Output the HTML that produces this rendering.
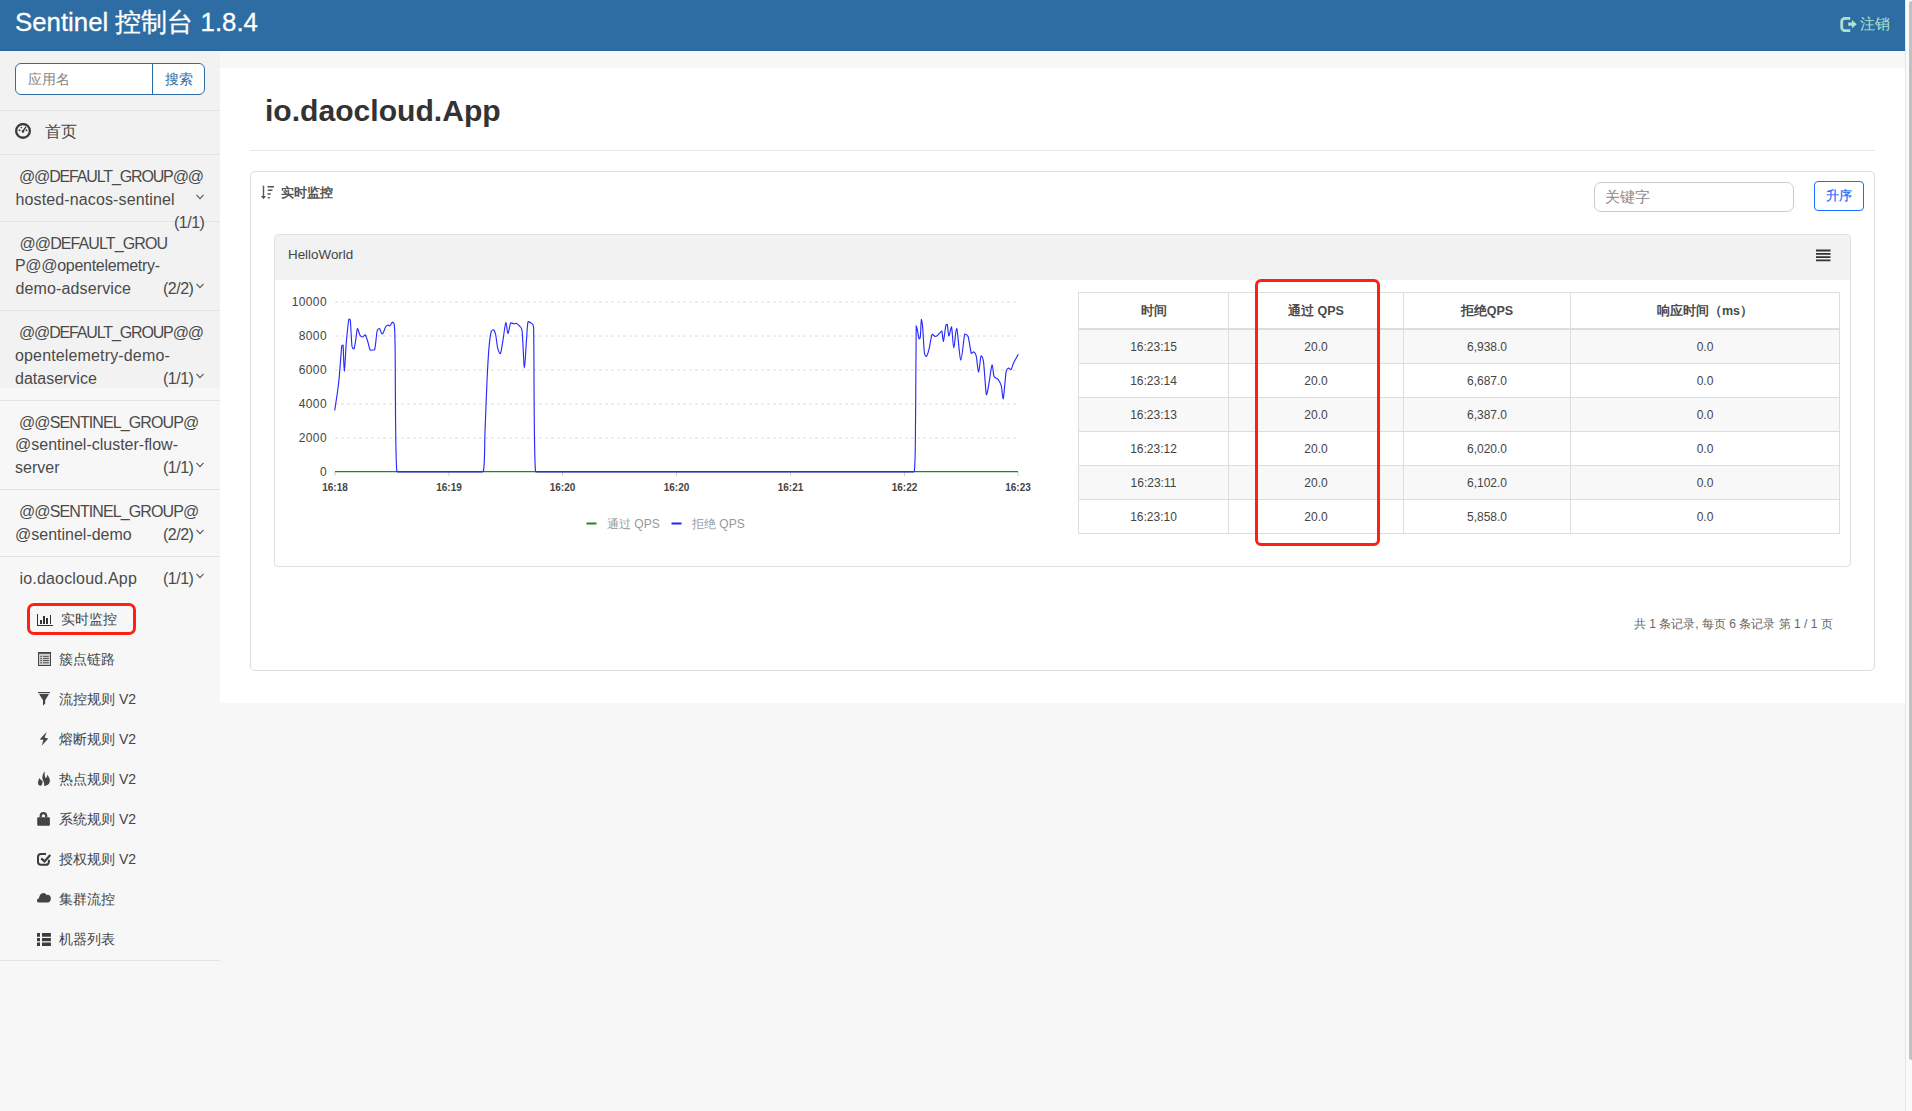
<!DOCTYPE html>
<html><head><meta charset="utf-8">
<style>
*{box-sizing:border-box;margin:0;padding:0}
html,body{width:1912px;height:1111px;overflow:hidden;background:#f7f7f7;font-family:"Liberation Sans",sans-serif;color:#333}
.a{position:absolute}
#hdr{left:0;top:0;width:1905px;height:51px;background:#2e6da4;border-bottom:1px solid #2a65a0}
#title{left:15px;top:7px;font-size:25.8px;-webkit-text-stroke:0.3px #fff;color:#fff;line-height:30px;white-space:nowrap}
#logout{left:1860px;top:15px;font-size:15.2px;color:#b0e2cb;line-height:18px;white-space:nowrap}
#sbar{left:1905px;top:0;width:7px;height:1111px;background:#fafafa;border-left:1px solid #e6e6e6}
#thumb{left:1909px;top:1px;width:3px;height:1059px;background:#c1c1c1;border-radius:3px 0 0 3px}
#side{left:0;top:51px;width:220px;height:337px;background:#f2f2f2}
.hr{position:absolute;left:0;width:220px;height:1px;background:#e3e3e3}
#search{left:15px;top:63px;width:190px;height:32px;border:1px solid #2e6da4;border-radius:6px;background:#fff}
#search .ph{position:absolute;left:12px;top:7px;font-size:14px;color:#858585;line-height:16px}
#search .btn{position:absolute;left:136px;top:0;width:53px;height:30px;border-left:1px solid #2e6da4;color:#2e6da4;font-size:14px;line-height:30px;text-align:center}
.grp{position:absolute;left:15px;width:190px;font-size:15px;letter-spacing:-0.4px;line-height:23px;color:#555;white-space:nowrap}
.cnt{position:absolute;right:11px;font-size:15px;color:#555;line-height:23px;letter-spacing:-0.4px}
.chev{position:absolute;left:196px;width:8px;height:6px;overflow:visible}
.gl{position:absolute;font-size:16px;line-height:23px;color:#4a4a4a;white-space:nowrap}
.sub{position:absolute;left:36px;width:170px;height:20px;font-size:14px;line-height:20px;color:#444;white-space:nowrap}
.sub .ic{position:absolute;top:3px}
.sub span{position:absolute;left:23px;top:-1px}
#panel{left:220px;top:68px;width:1685px;height:635px;background:#fff}
#h1{left:265px;top:92.5px;font-size:30.1px;font-weight:bold;color:#333;line-height:36px;white-space:nowrap}
#hr1{left:250px;top:150px;width:1625px;height:1px;background:#e6e6e6}
#card{left:250px;top:171px;width:1625px;height:500px;border:1px solid #ddd;border-radius:5px;background:#fff}
#cardt{left:281px;top:185px;font-size:13.3px;font-weight:bold;color:#555;line-height:16px}
#kw{left:1594px;top:182px;width:200px;height:30px;border:1px solid #ccc;border-radius:7px;background:#fff}
#kw span{position:absolute;left:10px;top:5px;font-size:15px;color:#888;line-height:17px}
#asc{left:1814px;top:181px;width:50px;height:30px;border:1px solid #1a6eff;border-radius:4px;color:#1a6eff;font-size:12.5px;line-height:28px;text-align:center;-webkit-text-stroke:0.2px #1a6eff}
#inner{left:274px;top:234px;width:1577px;height:333px;border:1px solid #e0e0e0;border-radius:4px;background:#fff;overflow:hidden}
#innerh{left:0;top:0;width:1577px;height:45px;background:#f2f2f2}
#hw{left:288px;top:246.5px;font-size:13.4px;color:#444;line-height:15px}
table{position:absolute;left:1078px;top:292px;border-collapse:collapse;font-size:12px;color:#444}
td,th{border:1px solid #ddd;text-align:center;height:34px;padding:0}
tr.r1 td{height:35px;padding-top:1px}
th{font-weight:bold;height:36px;padding:1.5px 0 0 0;border-bottom:2px solid #ddd;color:#4a4a4a;font-size:12.5px}
tr.o td{background:#f8f8f8}
#red1{left:1255px;top:279px;width:125px;height:267px;border:3px solid #fe2015;border-radius:6px}
#red2{left:27px;top:602.5px;width:109px;height:32.5px;border:3px solid #fe2015;border-radius:7px}
#foot{left:1634px;top:617px;font-size:12px;color:#666;line-height:14px;white-space:nowrap}
</style></head><body>
<div id="hdr" class="a"></div>
<div id="title" class="a">Sentinel 控制台 1.8.4</div>
<svg class="a" style="left:1840px;top:17px" width="17" height="15" viewBox="0 0 17 15"><path d="M10.3 1.3 H5 A3.3 3.3 0 0 0 1.7 4.6 V10.4 A3.3 3.3 0 0 0 5 13.7 H10.3" fill="none" stroke="#b0e2cb" stroke-width="2.8"/><path d="M8.2 5.6 H12 V3 L16.8 7.2 L12 11.3 V8.7 H8.2Z" fill="#b0e2cb"/></svg>
<div id="logout" class="a">注销</div>
<div id="sbar" class="a"></div>
<div id="thumb" class="a"></div>
<div id="side" class="a"></div>
<div id="search" class="a"><span class="ph">应用名</span><span class="btn">搜索</span></div>
<div class="hr" style="top:110px"></div>
<div class="hr" style="top:154px"></div>
<div class="hr" style="top:221px"></div>
<div class="hr" style="top:310px"></div>
<div class="hr" style="top:400px"></div>
<div class="hr" style="top:489px"></div>
<div class="hr" style="top:556px"></div>
<div class="hr" style="top:960px"></div>

<svg class="a" style="left:15px;top:123px" width="16" height="16" viewBox="0 0 16 16"><circle cx="8" cy="7.9" r="6.85" fill="none" stroke="#3a3a3a" stroke-width="2.3"/><path d="M8 8.2 L10.6 4.3" stroke="#3a3a3a" stroke-width="1.4" stroke-linecap="round"/><circle cx="8" cy="8.4" r="1.3" fill="#3a3a3a"/><circle cx="4.5" cy="7.3" r="0.95" fill="#3a3a3a"/><circle cx="11.5" cy="7.3" r="0.95" fill="#3a3a3a"/><circle cx="6.3" cy="4.6" r="0.8" fill="#3a3a3a"/></svg>
<div class="a" style="left:44.5px;top:122px;font-size:16px;line-height:20px;color:#444">首页</div>

<div class="gl" style="left:19px;top:165px;letter-spacing:-1.15px">@@DEFAULT_GROUP@@</div>
<div class="gl" style="left:15.5px;top:188px;letter-spacing:0.13px">hosted-nacos-sentinel</div>
<div class="gl" style="left:174px;top:211px;letter-spacing:-0.5px">(1/1)</div>
<svg class="chev" style="top:194px" viewBox="0 0 8 6"><path d="M0.5 0.8 L4 4.6 L7.5 0.8" fill="none" stroke="#555" stroke-width="1.1"/></svg>

<div class="gl" style="left:19.5px;top:232px;letter-spacing:-0.9px">@@DEFAULT_GROU</div>
<div class="gl" style="left:15px;top:254px;letter-spacing:-0.3px">P@@opentelemetry-</div>
<div class="gl" style="left:15.5px;top:277px;letter-spacing:0.13px">demo-adservice</div>
<div class="gl" style="left:163px;top:277px;letter-spacing:-0.5px">(2/2)</div>
<svg class="chev" style="top:283px" viewBox="0 0 8 6"><path d="M0.5 0.8 L4 4.6 L7.5 0.8" fill="none" stroke="#555" stroke-width="1.1"/></svg>

<div class="gl" style="left:19px;top:321px;letter-spacing:-1.15px">@@DEFAULT_GROUP@@</div>
<div class="gl" style="left:15px;top:344px;letter-spacing:0.15px">opentelemetry-demo-</div>
<div class="gl" style="left:15px;top:367px">dataservice</div>
<div class="gl" style="left:163px;top:367px;letter-spacing:-0.5px">(1/1)</div>
<svg class="chev" style="top:373px" viewBox="0 0 8 6"><path d="M0.5 0.8 L4 4.6 L7.5 0.8" fill="none" stroke="#555" stroke-width="1.1"/></svg>

<div class="gl" style="left:19px;top:411px;letter-spacing:-0.9px">@@SENTINEL_GROUP@</div>
<div class="gl" style="left:15px;top:433px">@sentinel-cluster-flow-</div>
<div class="gl" style="left:15px;top:456px">server</div>
<div class="gl" style="left:163px;top:456px;letter-spacing:-0.5px">(1/1)</div>
<svg class="chev" style="top:462px" viewBox="0 0 8 6"><path d="M0.5 0.8 L4 4.6 L7.5 0.8" fill="none" stroke="#555" stroke-width="1.1"/></svg>

<div class="gl" style="left:19px;top:500px;letter-spacing:-0.9px">@@SENTINEL_GROUP@</div>
<div class="gl" style="left:15px;top:523px">@sentinel-demo</div>
<div class="gl" style="left:163px;top:523px;letter-spacing:-0.5px">(2/2)</div>
<svg class="chev" style="top:529px" viewBox="0 0 8 6"><path d="M0.5 0.8 L4 4.6 L7.5 0.8" fill="none" stroke="#555" stroke-width="1.1"/></svg>

<div class="gl" style="left:19.5px;top:567px;letter-spacing:0.18px">io.daocloud.App</div>
<div class="gl" style="left:163px;top:567px;letter-spacing:-0.5px">(1/1)</div>
<svg class="chev" style="top:573px" viewBox="0 0 8 6"><path d="M0.5 0.8 L4 4.6 L7.5 0.8" fill="none" stroke="#555" stroke-width="1.1"/></svg>

<div class="sub" style="top:610px"><svg class="ic" style="left:1px;top:3px" width="17" height="14" viewBox="0 0 17 14" shape-rendering="crispEdges"><rect x="0" y="1" width="1.2" height="12" fill="#333"/><rect x="0" y="12" width="16" height="1.1" fill="#333"/><rect x="3" y="7" width="2" height="4" fill="#333"/><rect x="6.2" y="3.3" width="1.8" height="7.7" fill="#333"/><rect x="9.4" y="5.2" width="1.8" height="5.8" fill="#333"/><rect x="12.5" y="2" width="1.8" height="9" fill="#333"/></svg><span style="left:25px">实时监控</span></div>
<div class="sub" style="top:650px"><svg class="ic" style="left:0;top:0" width="20" height="20" viewBox="0 0 20 20"><rect x="2" y="2" width="13" height="14" fill="#444"/><rect x="3" y="3.8" width="11" height="11.2" fill="#cfcfcf"/><path d="M4.2 6.4 H6 M7 6.4 H12.8 M4.2 8.6 H6 M7 8.6 H12.8 M4.2 10.6 H6 M7 10.6 H12.8 M4.2 12.8 H6 M7 12.8 H12.8" stroke="#555" stroke-width="1"/></svg><span>簇点链路</span></div>
<div class="sub" style="top:690px"><svg class="ic" style="left:0;top:0" width="20" height="20" viewBox="0 0 20 20"><rect x="2" y="2" width="11.9" height="1.2" fill="#444"/><path d="M3.1 4 H13 L9.2 10.2 V13.5 L7 15.7 V10.2 Z" fill="#444"/></svg><span>流控规则 V2</span></div>
<div class="sub" style="top:730px"><svg class="ic" style="left:0;top:0" width="20" height="20" viewBox="0 0 20 20"><path d="M10.6 2.1 L3.6 9.5 L7.5 9.7 L5.6 15.8 L12.3 8.5 L8.6 7.7 Z" fill="#444"/></svg><span>熔断规则 V2</span></div>
<div class="sub" style="top:770px"><svg class="ic" style="left:0;top:0" width="20" height="20" viewBox="0 0 20 20"><path d="M8.5 1.3 C7 3.5 6.2 6 6.4 8.5 C6.6 10.5 8.2 12 8.2 14 C8.2 14.8 8 15.5 7.8 16 C11.5 15.8 13.9 13.8 13.9 10.8 C13.9 8.5 12.6 6.5 11 4.8 C11.1 6.3 10.6 7.8 9.8 8.3 C8.9 7.4 8.6 4.5 8.6 3 C8.6 2.4 8.6 1.8 8.5 1.3Z M3.4 8.1 C4.2 9.5 5.5 10.3 6.6 11.3 C6.8 13.5 5.8 15.6 4.6 15.7 C3 15.8 2 14.5 2 13 C2 11.2 2.8 9.8 3.4 8.1Z" fill="#444"/></svg><span>热点规则 V2</span></div>
<div class="sub" style="top:810px"><svg class="ic" style="left:0;top:0" width="20" height="20" viewBox="0 0 20 20"><path d="M4.7 7.5 V5.85 A2.75 2.75 0 0 1 10.2 5.85 V7.5" fill="none" stroke="#444" stroke-width="2.2"/><rect x="1.2" y="7.2" width="12.7" height="8.6" rx="1" fill="#444"/></svg><span>系统规则 V2</span></div>
<div class="sub" style="top:850px"><svg class="ic" style="left:0;top:0" width="20" height="20" viewBox="0 0 20 20"><path d="M10 4 H5 A3 3 0 0 0 2 7 V11.8 A3 3 0 0 0 5 14.8 H9.9 A3 3 0 0 0 12.9 11.8 V9.8" fill="none" stroke="#3c3c3c" stroke-width="2"/><path d="M5.2 8.4 L8.5 11.4 L14.3 5.1" fill="none" stroke="#3c3c3c" stroke-width="2.2"/></svg><span>授权规则 V2</span></div>
<div class="sub" style="top:890px"><svg class="ic" style="left:0;top:0" width="20" height="20" viewBox="0 0 20 20"><path d="M3 12.6 C1.5 12.6 1 11.4 1 10.5 C1 9.3 2 8.4 3 8.3 C3.2 5.2 5 3 7.2 3 C8.8 3 10 3.8 10.8 5.2 C11.3 4.9 11.8 4.8 12.4 4.9 C13.9 5.1 14.9 6.5 14.9 8.5 C14.9 10.8 13.6 12.6 11.5 12.6Z" fill="#444"/></svg><span>集群流控</span></div>
<div class="sub" style="top:930px"><svg class="ic" style="left:0;top:0" width="20" height="20" viewBox="0 0 20 20"><path d="M1 3 H4 V6.7 H1Z M6 3 H14.9 V6.7 H6Z M1 8 H4 V11.2 H1Z M6 8 H14.9 V11.2 H6Z M1 12.6 H4 V16 H1Z M6 12.6 H14.9 V16 H6Z" fill="#3c3c3c"/></svg><span>机器列表</span></div>


<div id="panel" class="a"></div>
<div id="h1" class="a">io.daocloud.App</div>
<div id="hr1" class="a"></div>
<div id="card" class="a"></div>
<svg class="a" style="left:261px;top:185px" width="14" height="15" viewBox="0 0 14 15"><path d="M2.5 0.7 V12.5" stroke="#555" stroke-width="1.4"/><path d="M0 11 H5 L2.5 14.2Z" fill="#555"/><path d="M6.5 1.7 H13 M6.8 5.3 H11.4 M6.5 9 H9.7 M6.8 12.8 H8.8" stroke="#555" stroke-width="1.4"/></svg>
<div id="cardt" class="a">实时监控</div>
<div id="kw" class="a"><span>关键字</span></div>
<div id="asc" class="a">升序</div>
<div id="inner" class="a"><div id="innerh" class="a"></div></div>
<div id="hw" class="a">HelloWorld</div>
<svg class="a" style="left:1816px;top:249px" width="15" height="14" viewBox="0 0 15 14"><path d="M0 1.5 H14.5 M0 4.8 H14.5 M0 8.1 H14.5 M0 11.4 H14.5" stroke="#333" stroke-width="1.8"/></svg>
<svg class="a" style="left:0;top:0" width="1100" height="560" viewBox="0 0 1100 560">
<g><line x1="335" y1="302" x2="1018" y2="302" stroke="#dcdcdc" stroke-width="1" stroke-dasharray="3 3" stroke-dashoffset="0"/><line x1="335" y1="336" x2="1018" y2="336" stroke="#dcdcdc" stroke-width="1" stroke-dasharray="3 3" stroke-dashoffset="0"/><line x1="335" y1="370" x2="1018" y2="370" stroke="#dcdcdc" stroke-width="1" stroke-dasharray="3 3" stroke-dashoffset="0"/><line x1="335" y1="404" x2="1018" y2="404" stroke="#dcdcdc" stroke-width="1" stroke-dasharray="3 3" stroke-dashoffset="0"/><line x1="335" y1="438" x2="1018" y2="438" stroke="#dcdcdc" stroke-width="1" stroke-dasharray="3 3" stroke-dashoffset="0"/></g>
<g font-family="Liberation Sans, sans-serif" font-size="12" fill="#444" letter-spacing="0.4"><text x="327" y="306.3" text-anchor="end">10000</text><text x="327" y="340.3" text-anchor="end">8000</text><text x="327" y="374.3" text-anchor="end">6000</text><text x="327" y="408.3" text-anchor="end">4000</text><text x="327" y="442.3" text-anchor="end">2000</text><text x="327" y="476.3" text-anchor="end">0</text></g>
<g font-family="Liberation Sans, sans-serif" font-size="10" font-weight="bold" fill="#444"><line x1="335" y1="472" x2="335" y2="476" stroke="#ccc" stroke-width="1"/><text x="335" y="491" text-anchor="middle">16:18</text><line x1="449" y1="472" x2="449" y2="476" stroke="#ccc" stroke-width="1"/><text x="449" y="491" text-anchor="middle">16:19</text><line x1="562.5" y1="472" x2="562.5" y2="476" stroke="#ccc" stroke-width="1"/><text x="562.5" y="491" text-anchor="middle">16:20</text><line x1="676.5" y1="472" x2="676.5" y2="476" stroke="#ccc" stroke-width="1"/><text x="676.5" y="491" text-anchor="middle">16:20</text><line x1="790.5" y1="472" x2="790.5" y2="476" stroke="#ccc" stroke-width="1"/><text x="790.5" y="491" text-anchor="middle">16:21</text><line x1="904.5" y1="472" x2="904.5" y2="476" stroke="#ccc" stroke-width="1"/><text x="904.5" y="491" text-anchor="middle">16:22</text><line x1="1018" y1="472" x2="1018" y2="476" stroke="#ccc" stroke-width="1"/><text x="1018" y="491" text-anchor="middle">16:23</text></g>
<line x1="335" y1="471.7" x2="1018" y2="471.7" stroke="#1a8a1a" stroke-width="1.3"/>
<line x1="397" y1="471.7" x2="483" y2="471.7" stroke="#2424d8" stroke-width="1.4"/>
<line x1="535.5" y1="471.7" x2="914" y2="471.7" stroke="#2424d8" stroke-width="1.4"/>
<path d="M334.7 410.5 C335.4 405.8 337.5 393.1 338.7 382.3 C339.9 371.5 341.1 351.8 341.8 345.6 C342.5 345.0 342.7 345.0 343.1 345.0 C343.5 349.3 343.8 371.2 344.3 371.2 C344.9 370.6 345.6 350.0 346.4 341.3 C347.2 332.6 348.2 322.6 348.9 319.0 C349.5 319.0 349.8 319.0 350.3 320.0 C350.8 324.6 351.4 341.6 352.0 346.4 C352.6 349.0 353.4 349.0 354.0 349.0 C354.6 347.9 355.2 343.0 355.8 339.6 C356.4 336.2 356.8 329.2 357.5 328.5 C358.2 328.5 359.1 333.9 360.0 335.3 C360.9 336.7 361.7 337.0 362.6 337.0 C363.5 336.9 364.4 334.8 365.2 334.8 C366.0 335.5 366.8 338.7 367.7 341.3 C368.6 343.9 369.1 348.8 370.3 350.2 C371.5 350.2 373.5 350.2 374.6 349.8 C375.7 346.6 376.3 334.6 377.1 331.0 C377.9 328.5 378.5 328.5 379.4 328.5 C380.3 329.0 381.2 334.0 382.3 334.0 C383.4 333.7 384.7 328.3 385.7 326.8 C386.7 325.3 387.5 325.1 388.2 325.0 C388.9 325.0 389.3 325.9 390.0 325.9 C390.7 325.4 391.8 322.4 392.5 322.1 C393.2 322.1 393.8 322.1 394.2 324.2 C394.6 328.2 394.7 324.2 395.1 346.4 C395.5 370.9 395.1 450.6 396.8 471.5 C411.5 471.5 468.6 471.5 483.3 471.5 C485.0 464.9 484.4 447.3 485.0 431.9 C485.6 416.5 486.4 393.1 487.1 378.9 C487.8 364.6 488.4 354.4 489.1 346.4 C489.8 338.4 490.6 333.8 491.4 331.0 C492.1 329.7 492.9 329.7 493.6 329.7 C494.3 330.3 494.9 331.3 495.6 334.4 C496.3 337.5 496.9 344.9 497.7 348.1 C498.5 351.3 499.5 353.6 500.4 353.6 C501.2 352.5 501.9 346.5 502.8 341.3 C503.7 336.1 505.0 323.8 505.9 322.5 C506.8 322.5 507.1 333.6 507.9 333.6 C508.7 333.6 509.7 324.4 510.7 322.8 C511.7 322.8 513.2 323.7 514.1 323.8 C515.0 323.8 515.3 323.3 516.2 323.3 C517.1 323.7 518.6 324.9 519.6 326.2 C520.6 327.5 521.3 326.2 522.1 331.0 C522.9 337.9 523.7 366.1 524.4 367.8 C525.1 367.8 525.8 349.0 526.4 341.3 C527.0 333.6 527.2 324.6 528.1 321.6 C529.0 321.6 530.6 322.4 531.5 323.3 C532.4 324.2 532.9 323.3 533.6 326.8 C534.3 351.5 533.6 447.4 535.5 471.5 C599.0 471.5 850.9 471.5 914.3 471.5 C915.6 461.8 915.3 437.8 915.6 413.5 C915.9 389.2 915.9 339.7 916.2 325.9 C916.5 325.9 917.0 328.6 917.5 330.8 C918.0 333.0 918.6 337.8 919.1 338.9 C919.6 338.9 919.9 338.9 920.3 337.3 C920.7 334.1 921.0 321.0 921.4 319.4 C921.8 319.4 922.2 322.2 922.7 327.6 C923.2 333.0 923.7 347.1 924.3 351.9 C924.9 356.4 925.6 356.4 926.4 356.4 C927.1 356.1 927.8 353.9 928.8 350.2 C929.8 346.5 931.0 336.7 932.1 334.4 C933.2 334.4 934.6 336.5 935.7 336.5 C936.8 336.4 937.9 334.9 938.9 334.0 C939.9 333.1 941.0 331.1 941.8 331.1 C942.5 332.3 942.7 341.3 943.4 341.3 C944.1 340.3 945.2 327.9 945.9 325.1 C946.5 324.3 946.8 324.3 947.3 324.3 C947.8 326.1 948.2 335.6 948.9 336.0 C949.6 336.0 950.7 326.7 951.5 326.7 C952.3 328.7 952.9 347.5 953.8 347.8 C954.7 347.8 955.5 328.4 956.7 328.4 C957.9 330.4 959.4 359.1 960.8 360.0 C962.1 360.0 963.6 337.9 964.8 334.0 C966.0 334.0 967.0 334.0 968.1 336.5 C969.2 339.8 970.4 350.9 971.3 353.5 C972.2 353.5 972.9 351.9 973.7 351.9 C974.5 352.3 975.4 352.5 976.2 355.9 C977.0 359.3 977.8 372.1 978.6 372.1 C979.4 372.1 980.2 357.6 981.0 355.9 C981.8 355.9 982.6 355.9 983.5 361.6 C984.4 368.1 985.5 391.0 986.4 394.8 C987.3 394.8 987.8 389.3 988.8 384.3 C989.8 379.3 991.2 366.2 992.1 364.8 C993.0 364.8 993.0 373.8 994.0 376.2 C995.0 378.6 996.9 377.8 998.1 379.4 C999.3 381.0 1000.4 382.6 1001.3 385.9 C1002.1 389.1 1002.4 398.9 1003.2 398.9 C1004.0 396.5 1005.3 376.4 1006.2 371.3 C1007.1 368.1 1007.8 368.4 1008.6 368.1 C1009.4 368.1 1010.2 369.7 1011.0 369.7 C1011.8 368.9 1012.3 365.8 1013.5 363.2 C1014.7 360.6 1017.5 355.8 1018.3 354.3" fill="none" stroke="#2a2aff" stroke-width="1.15" stroke-linejoin="round"/>
<line x1="586.5" y1="523.5" x2="596.5" y2="523.5" stroke="#1a8a1a" stroke-width="2"/>
<line x1="671.5" y1="523.5" x2="681.5" y2="523.5" stroke="#2222ee" stroke-width="2"/>
<g font-family="Liberation Sans, sans-serif" font-size="12" fill="#999"><text x="607" y="527.5">通过 QPS</text><text x="692" y="527.5">拒绝 QPS</text></g>
</svg>
<table>
<tr><th style="width:150px">时间</th><th style="width:175px">通过 QPS</th><th style="width:167px">拒绝QPS</th><th style="width:269px">响应时间（ms）</th></tr>
<tr class="o r1"><td>16:23:15</td><td>20.0</td><td>6,938.0</td><td>0.0</td></tr>
<tr><td>16:23:14</td><td>20.0</td><td>6,687.0</td><td>0.0</td></tr>
<tr class="o"><td>16:23:13</td><td>20.0</td><td>6,387.0</td><td>0.0</td></tr>
<tr><td>16:23:12</td><td>20.0</td><td>6,020.0</td><td>0.0</td></tr>
<tr class="o"><td>16:23:11</td><td>20.0</td><td>6,102.0</td><td>0.0</td></tr>
<tr><td>16:23:10</td><td>20.0</td><td>5,858.0</td><td>0.0</td></tr>
</table>
<div id="red1" class="a"></div>
<div id="red2" class="a"></div>
<div id="foot" class="a">共 1 条记录, 每页 6 条记录 第 1 / 1 页</div>
</body></html>
